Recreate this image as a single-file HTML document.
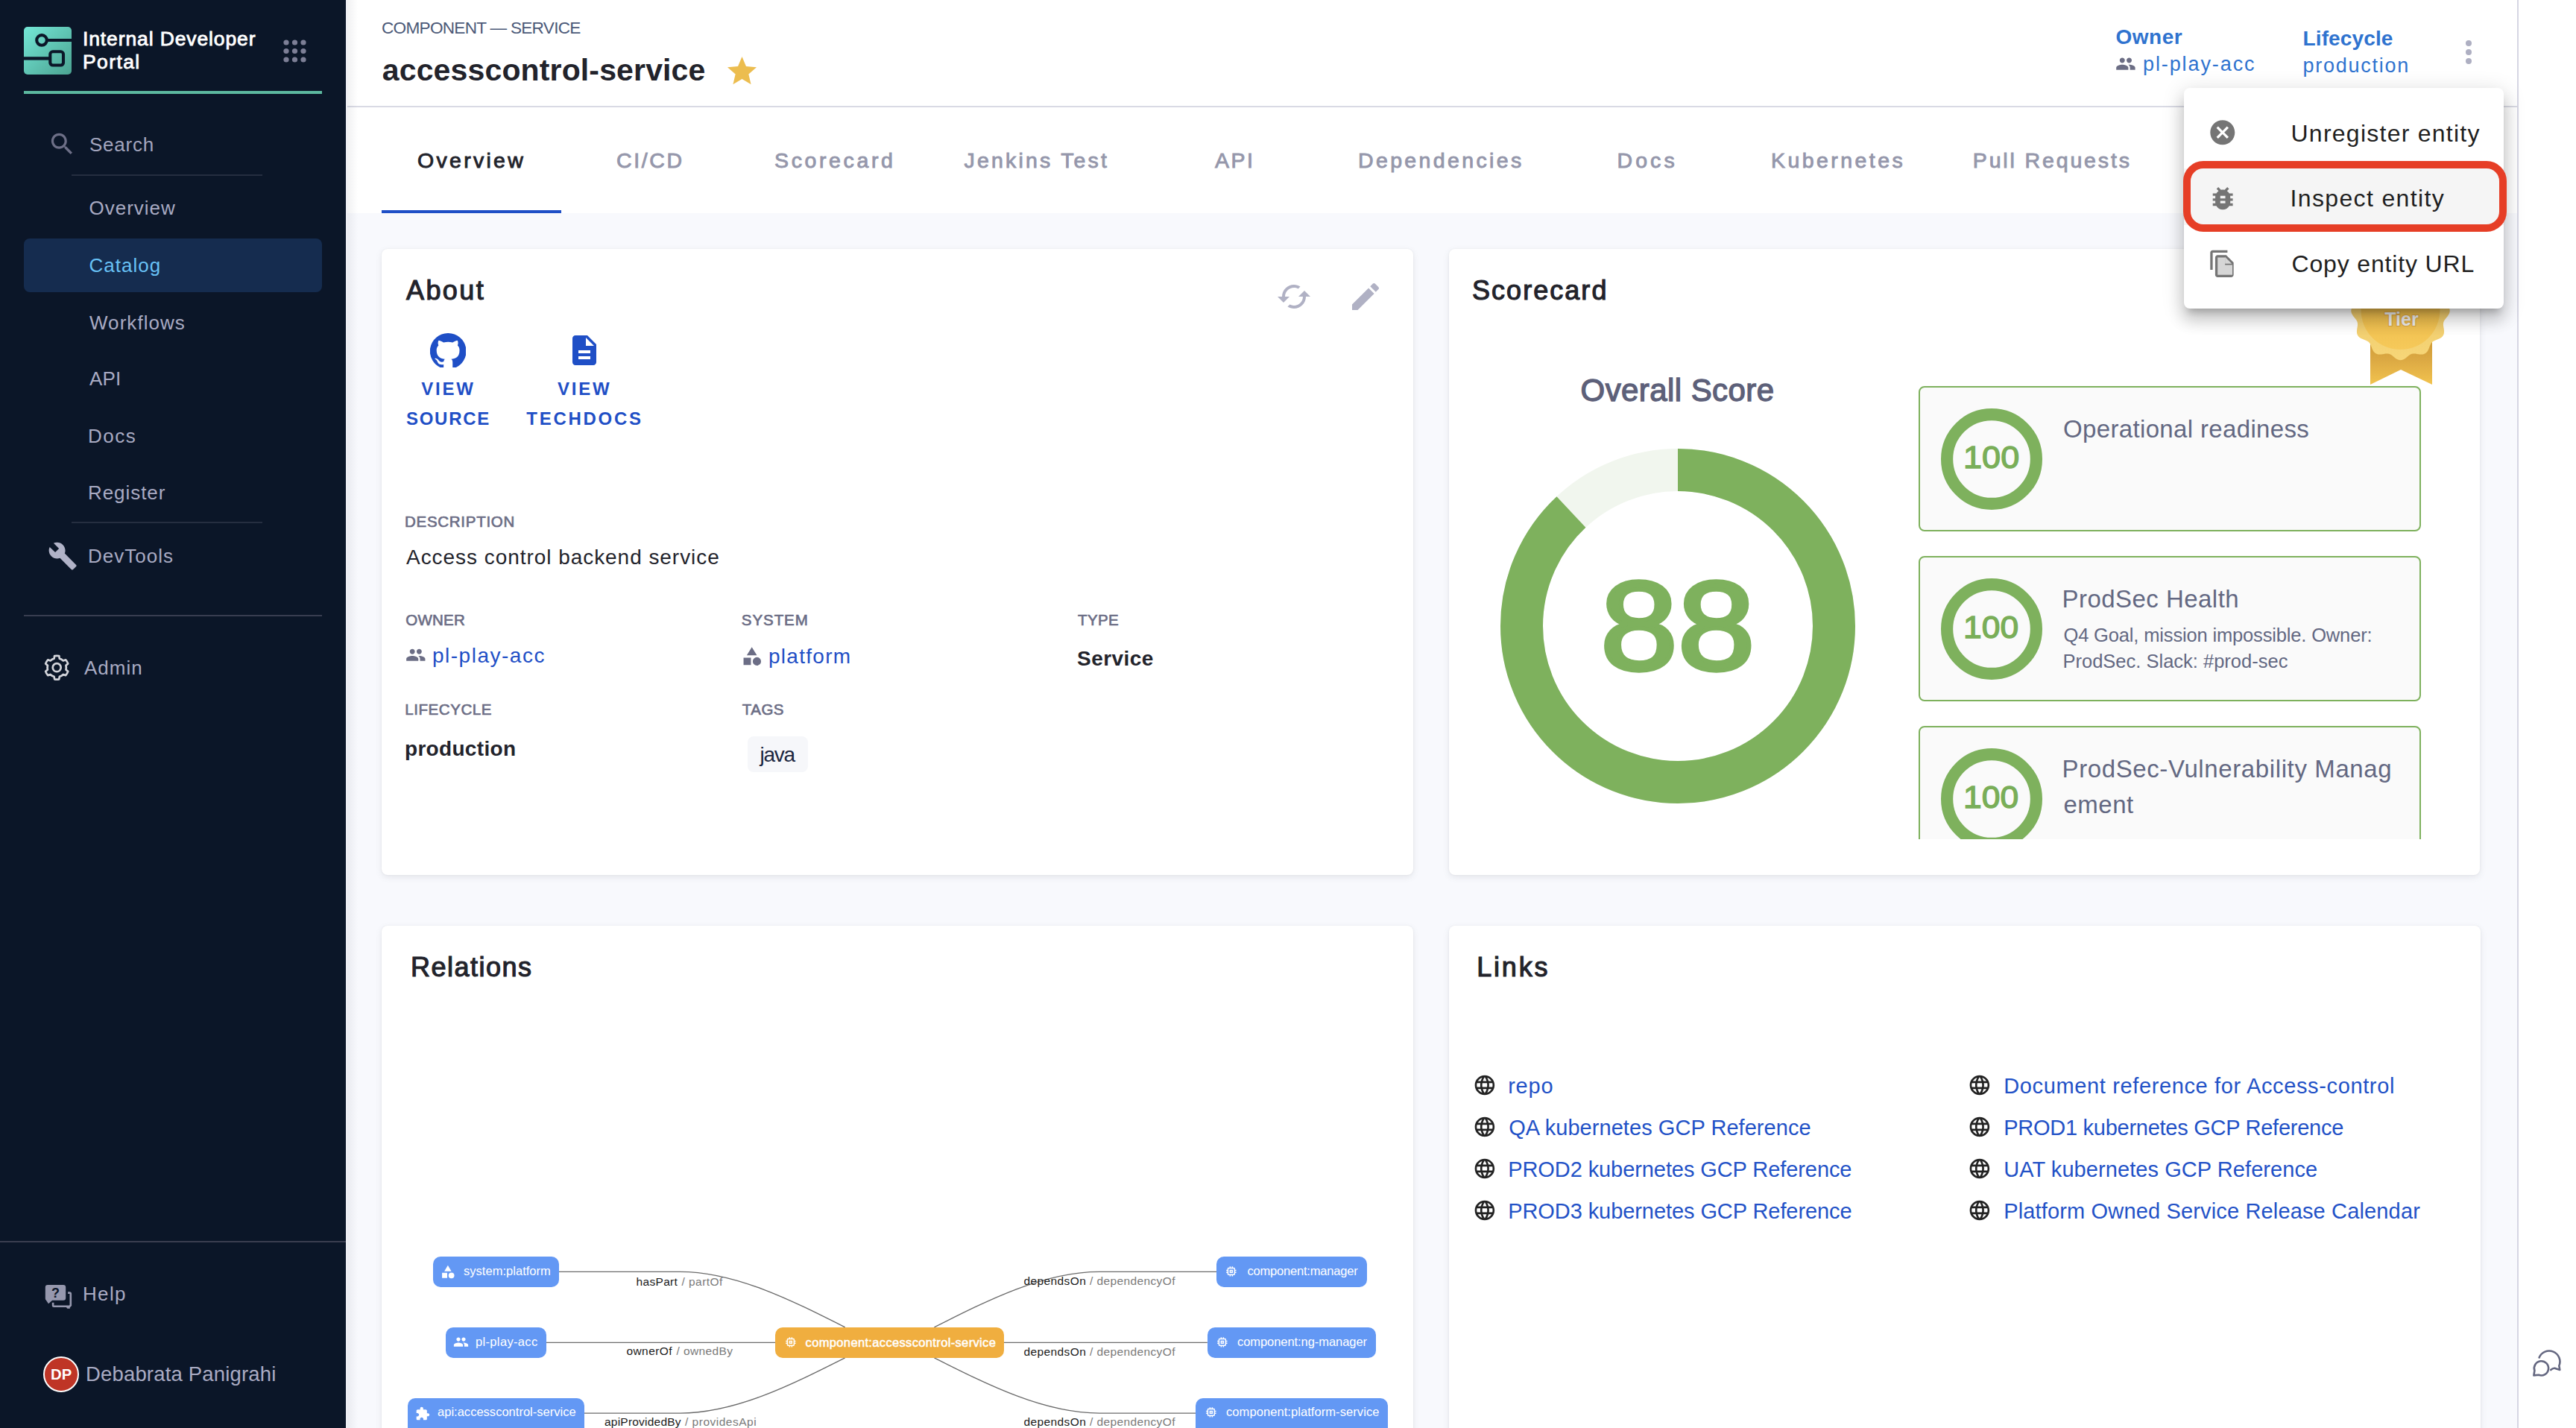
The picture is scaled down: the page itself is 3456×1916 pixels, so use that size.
<!DOCTYPE html>
<html><head><meta charset="utf-8"><title>accesscontrol-service | Internal Developer Portal</title>
<style>
html,body{margin:0;padding:0;}
body{width:3456px;height:1916px;position:relative;overflow:hidden;background:#f8f9fd;font-family:"Liberation Sans",sans-serif;}
.t{position:absolute;line-height:1;white-space:nowrap;}

.card{position:absolute;background:#fff;border-radius:8px;box-shadow:0 1px 3px rgba(30,35,60,0.08),0 0 1px rgba(30,35,60,0.10);}
.z{z-index:20;}

</style></head><body>
<div style="position:absolute;left:0px;top:0px;width:464px;height:1916px;background:#0b1628;"></div>
<div style="position:absolute;left:464px;top:0px;width:2913px;height:143px;background:#fff;"></div>
<div style="position:absolute;left:464px;top:142px;width:2913px;height:2px;background:#d9dae4;"></div>
<div style="position:absolute;left:464px;top:144px;width:2913px;height:142px;background:#ffffff;"></div>
<div style="position:absolute;left:3377px;top:0px;width:79px;height:1916px;background:#fff;"></div>
<div style="position:absolute;left:3377px;top:0px;width:1.5px;height:1916px;background:#d6d6e4;"></div>
<div style="position:absolute;left:464px;top:0px;width:16px;height:1916px;background:linear-gradient(90deg,rgba(20,25,50,0.07),rgba(20,25,50,0));"></div>
<div style="position:absolute;left:464px;top:0px;width:2px;height:1916px;background:#eeeff4;"></div>
<svg style="position:absolute;left:32px;top:36px" width="64" height="64" viewBox="0 0 64 64">
<defs><linearGradient id="lg" x1="0" y1="0" x2="1" y2="1"><stop offset="0" stop-color="#74e6d6"/><stop offset="1" stop-color="#4ba391"/></linearGradient></defs>
<rect x="0" y="0" width="64" height="64" rx="5" fill="url(#lg)"/>
<circle cx="24" cy="17.9" r="6.8" fill="none" stroke="#0b1628" stroke-width="4.1"/>
<rect x="30" y="16" width="34" height="4" fill="#0b1628"/>
<rect x="35.3" y="33.3" width="17.7" height="18.2" rx="3.5" fill="none" stroke="#0b1628" stroke-width="4.1"/>
<rect x="0" y="40.2" width="35.3" height="4.4" fill="#0b1628"/>
</svg>
<svg style="position:absolute;left:380px;top:53px" width="32" height="32" viewBox="0 0 32 32"><circle cx="4.0" cy="4.0" r="3.6" fill="#7d7f96"/><circle cx="4.0" cy="15.5" r="3.6" fill="#7d7f96"/><circle cx="4.0" cy="27.0" r="3.6" fill="#7d7f96"/><circle cx="15.5" cy="4.0" r="3.6" fill="#7d7f96"/><circle cx="15.5" cy="15.5" r="3.6" fill="#7d7f96"/><circle cx="15.5" cy="27.0" r="3.6" fill="#7d7f96"/><circle cx="27.0" cy="4.0" r="3.6" fill="#7d7f96"/><circle cx="27.0" cy="15.5" r="3.6" fill="#7d7f96"/><circle cx="27.0" cy="27.0" r="3.6" fill="#7d7f96"/></svg>
<div style="position:absolute;left:32px;top:122px;width:400px;height:4px;background:#5cb89f;"></div>
<svg style="position:absolute;left:64.2px;top:174.2px" width="38.7" height="38.7" viewBox="0 0 24 24"><path fill="#6d6f87" d="M15.5 14h-.79l-.28-.27C15.41 12.59 16 11.11 16 9.5 16 5.91 13.09 3 9.5 3S3 5.91 3 9.5 5.91 16 9.5 16c1.61 0 3.09-.59 4.23-1.57l.27.28v.79l5 4.99L20.49 19l-4.99-5zm-6 0C7.01 14 5 11.99 5 9.5S7.01 5 9.5 5 14 7.01 14 9.5 11.99 14 9.5 14z"/></svg>
<div style="position:absolute;left:96px;top:234px;width:256px;height:2px;background:#252e40;"></div>
<div style="position:absolute;left:32px;top:320px;width:400px;height:71.5px;background:#152c4f;border-radius:8px;"></div>
<div style="position:absolute;left:96px;top:700px;width:256px;height:2px;background:#252e40;"></div>
<svg style="position:absolute;left:63.85px;top:725.85px" width="40.3" height="40.3" viewBox="0 0 24 24"><path fill="#b1b3c8" d="M22.7 19l-9.1-9.1c.9-2.3.4-5-1.5-6.9-2-2-5-2.4-7.4-1.3L9 6 6 9 1.6 4.7C.4 7.1.9 10.1 2.9 12.1c1.9 1.9 4.6 2.4 6.9 1.5l9.1 9.1c.4.4 1 .4 1.4 0l2.3-2.3c.5-.4.5-1.1.1-1.4z"/></svg>
<div style="position:absolute;left:32px;top:825px;width:400px;height:2px;background:#383d50;"></div>
<svg style="position:absolute;left:50px;top:870px" width="55" height="55" viewBox="50 870 55 55"><path fill="none" stroke="#d3d4da" stroke-width="2.7" stroke-linejoin="round" d="M72.52,883.65 L73.17,880.09 A15.9,15.9 0 0 1 79.23,880.09 L79.88,883.65 A12.6,12.6 0 0 1 84.79,886.48 L88.20,885.27 A15.9,15.9 0 0 1 91.23,890.52 L88.48,892.87 A12.6,12.6 0 0 1 88.48,898.53 L91.23,900.88 A15.9,15.9 0 0 1 88.20,906.13 L84.79,904.92 A12.6,12.6 0 0 1 79.88,907.75 L79.23,911.31 A15.9,15.9 0 0 1 73.17,911.31 L72.52,907.75 A12.6,12.6 0 0 1 67.61,904.92 L64.20,906.13 A15.9,15.9 0 0 1 61.17,900.88 L63.92,898.53 A12.6,12.6 0 0 1 63.92,892.87 L61.17,890.52 A15.9,15.9 0 0 1 64.20,885.27 L67.61,886.48 A12.6,12.6 0 0 1 72.52,883.65 Z"/><circle cx="76.2" cy="895.7" r="5.5" fill="none" stroke="#d3d4da" stroke-width="2.7"/></svg>
<div style="position:absolute;left:0px;top:1665px;width:464px;height:2px;background:#3a3e50;"></div>
<svg style="position:absolute;left:50px;top:1715px" width="60" height="50" viewBox="50 1715 60 50">
<path fill="#9698ae" d="M64 1724.1h21a3.2 3.2 0 0 1 3.2 3.2v14.3a3.2 3.2 0 0 1-3.2 3.2H70.1l-5.1 4.4-3.2-4.6a3.2 3.2 0 0 1-1-2.6v-14.7a3.2 3.2 0 0 1 3.2-3.2z"/>
<path fill="none" stroke="#9698ae" stroke-width="2.6" d="M91.1 1734.6h2.3a1.4 1.4 0 0 1 1.4 1.4v15.5l-1.2 1.2h-21.3a1.2 1.2 0 0 1-1.2-1.2v-3.8"/>
<path fill="#9698ae" d="M88.2 1753.2l2.2 2.6h3.4v-3z"/>
<text x="74.6" y="1741" font-family="Liberation Sans" font-weight="700" font-size="18" fill="#0b1628" text-anchor="middle">?</text>
</svg>
<div style="position:absolute;left:58px;top:1820px;width:44px;height:44px;border-radius:50%;background:#bf3526;border:2px solid #fff;"></div>
<svg style="position:absolute;left:975.5px;top:75.8px" width="39" height="37.2" viewBox="2 3 20 19" preserveAspectRatio="none"><path fill="#ecbd4f" d="M12 18.27L18.18 22l-1.64-7.03L22 10.24l-7.19-.61L12 3 9.19 9.63 2 10.24l5.46 4.73L5.82 22z"/></svg>
<svg style="position:absolute;left:2837.9px;top:74.4px" width="27.8" height="23.1" viewBox="0 0 24 20"><path fill="#6b6d84" d="M16 9c1.66 0 2.99-1.34 2.99-3S17.66 3 16 3c-1.66 0-3 1.34-3 3s1.34 3 3 3zm-8 0c1.66 0 2.99-1.34 2.99-3S9.66 3 8 3C6.34 3 5 4.34 5 6s1.34 3 3 3zm0 2c-2.33 0-7 1.17-7 3.5V17h14v-2.5c0-2.33-4.67-3.5-7-3.5zm8 0c-.29 0-.62.02-.97.05 1.16.84 1.97 1.97 1.97 3.45V17h6v-2.5c0-2.33-4.67-3.5-7-3.5z"/></svg>
<div style="position:absolute;left:3307.9px;top:53.85px;width:8.299999999999727px;height:8.299999999999997px;background:#aeafc2;border-radius:50%;"></div>
<div style="position:absolute;left:3307.9px;top:65.85px;width:8.299999999999727px;height:8.300000000000011px;background:#aeafc2;border-radius:50%;"></div>
<div style="position:absolute;left:3307.9px;top:77.85px;width:8.299999999999727px;height:8.300000000000011px;background:#aeafc2;border-radius:50%;"></div>
<div style="position:absolute;left:512px;top:282px;width:241px;height:4px;background:#1f4fc6;"></div>
<div style="position:absolute;left:512px;top:334px;width:1384px;height:840px;background:#fff;border-radius:8px;box-shadow:0 3px 8px rgba(96,97,112,0.13),0 0 2px rgba(96,97,112,0.10);"></div>
<div style="position:absolute;left:1944px;top:334px;width:1383px;height:840px;background:#fff;border-radius:8px;box-shadow:0 3px 8px rgba(96,97,112,0.13),0 0 2px rgba(96,97,112,0.10);"></div>
<div style="position:absolute;left:512px;top:1242px;width:1384px;height:758px;background:#fff;border-radius:8px;box-shadow:0 3px 8px rgba(96,97,112,0.13),0 0 2px rgba(96,97,112,0.10);"></div>
<div style="position:absolute;left:1944px;top:1242px;width:1384px;height:758px;background:#fff;border-radius:8px;box-shadow:0 3px 8px rgba(96,97,112,0.13),0 0 2px rgba(96,97,112,0.10);"></div>
<svg style="position:absolute;left:1712px;top:374px" width="48" height="48" viewBox="0 0 24 24"><path fill="#b0b1c4" d="M19 8l-4 4h3c0 3.31-2.69 6-6 6-1.01 0-1.97-.25-2.8-.7l-1.46 1.46C8.97 19.54 10.43 20 12 20c4.42 0 8-3.58 8-8h3l-4-4zM6 12c0-3.31 2.69-6 6-6 1.01 0 1.97.25 2.8.7l1.46-1.46C15.03 4.46 13.57 4 12 4c-4.42 0-8 3.58-8 8H1l4 4 4-4H6z"/></svg>
<svg style="position:absolute;left:1808px;top:374px" width="48" height="48" viewBox="0 0 24 24"><path fill="#b0b1c4" d="M3 17.25V21h3.75L17.81 9.94l-3.75-3.75L3 17.25zM20.71 7.04c.39-.39.39-1.02 0-1.41l-2.34-2.34c-.39-.39-1.02-.39-1.41 0l-1.83 1.83 3.75 3.75 1.83-1.83z"/></svg>
<svg style="position:absolute;left:576.6px;top:446.6px" width="48.4" height="46.4" viewBox="1 1.27 22 21.1"><path fill="#1f4fc6" d="M12 1.27a11 11 0 00-3.48 21.46c.55.09.73-.28.73-.55v-1.84c-3.03.64-3.67-1.46-3.67-1.46-.55-1.29-1.28-1.65-1.28-1.65-.92-.65.1-.65.1-.65 1.1 0 1.73 1.1 1.73 1.1.92 1.65 2.57 1.2 3.21.92a2 2 0 01.64-1.47c-2.47-.27-5.04-1.19-5.04-5.5 0-1.1.46-2.1 1.2-2.84a3.76 3.76 0 010-2.93s.91-.28 3.11 1.1c1.8-.49 3.7-.49 5.5 0 2.1-1.38 3.02-1.1 3.02-1.1a3.76 3.76 0 010 2.93c.83.74 1.2 1.74 1.2 2.94 0 4.2-2.57 5.13-5.04 5.4.45.37.82.92.82 2.02v3.03c0 .27.1.64.73.55A11 11 0 0012 1.27"/></svg>
<svg style="position:absolute;left:759.7px;top:445.8px" width="48" height="48" viewBox="0 0 24 24"><path fill="#1f4fc6" d="M14 2H6c-1.1 0-1.99.9-1.99 2L4 20c0 1.1.89 2 1.99 2H18c1.1 0 2-.9 2-2V8l-6-6zm2 16H8v-2h8v2zm0-4H8v-2h8v2zm-3-5V3.5L18.5 9H13z"/></svg>
<svg style="position:absolute;left:543.6px;top:865.3px" width="27.6" height="27.6" viewBox="0 0 24 24"><path fill="#6b6d85" d="M16 11c1.66 0 2.99-1.34 2.99-3S17.66 5 16 5c-1.66 0-3 1.34-3 3s1.34 3 3 3zm-8 0c1.66 0 2.99-1.34 2.99-3S9.66 5 8 5C6.34 5 5 6.34 5 8s1.34 3 3 3zm0 2c-2.33 0-7 1.17-7 3.5V19h14v-2.5c0-2.33-4.67-3.5-7-3.5zm8 0c-.29 0-.62.02-.97.05 1.16.84 1.97 1.97 1.97 3.45V19h6v-2.5c0-2.33-4.67-3.5-7-3.5z"/></svg>
<svg style="position:absolute;left:996.2px;top:866.7px" width="26.6" height="26.6" viewBox="2 1 21 21.5"><path fill="#6b6d85" d="M12 2l-5.5 9h11z M17.5 17.5m-4.5 0a4.5 4.5 0 1 0 9 0a4.5 4.5 0 1 0 -9 0 M3 13.5h8v8H3z"/></svg>
<div style="position:absolute;left:1003px;top:987.7px;width:81px;height:48.09999999999991px;background:#f6f7fa;border-radius:8px;"></div>
<svg style="position:absolute;left:2010.75px;top:599.80px" width="480" height="480" viewBox="-240 -240 480 480">
<circle r="209.5" fill="none" stroke="#f1f6ee" stroke-width="57"/>
<circle r="209.5" fill="none" stroke="#7eb15d" stroke-width="57" stroke-dasharray="1158.37 1316.3273218541233" transform="rotate(-90)"/>
</svg>
<div style="position:absolute;left:2574px;top:518.2px;width:674px;height:195.0999999999999px;border:2px solid #7eb15d;border-radius:8px;background:#fafafa;box-sizing:border-box;"></div>
<svg style="position:absolute;left:2604px;top:547.8px" width="136" height="136" viewBox="-68 -68 136 136"><circle r="59.9" fill="none" stroke="#7eb15d" stroke-width="16.2"/></svg>
<div style="position:absolute;left:2574px;top:746.2px;width:674px;height:195.0999999999999px;border:2px solid #7eb15d;border-radius:8px;background:#fafafa;box-sizing:border-box;"></div>
<svg style="position:absolute;left:2604px;top:775.8px" width="136" height="136" viewBox="-68 -68 136 136"><circle r="59.9" fill="none" stroke="#7eb15d" stroke-width="16.2"/></svg>
<div style="position:absolute;left:2574px;top:974.2px;width:674px;height:151.5px;overflow:hidden;"><div style="position:absolute;left:0;top:0;width:670px;height:191px;border:2px solid #7eb15d;border-radius:8px;background:#fafafa;"></div><svg style="position:absolute;left:30px;top:29.6px" width="136" height="136" viewBox="-68 -68 136 136"><circle r="59.9" fill="none" stroke="#7eb15d" stroke-width="16.2"/></svg></div>
<svg style="position:absolute;left:3140px;top:330px" width="170" height="200" viewBox="3140 330 170 200">
<defs>
<linearGradient id="rib" x1="0" y1="0" x2="0" y2="1"><stop offset="0" stop-color="#c9922e"/><stop offset="0.55" stop-color="#dba843"/><stop offset="1" stop-color="#f2c34f"/></linearGradient>
<linearGradient id="med" x1="0" y1="0" x2="0" y2="1"><stop offset="0" stop-color="#d3a94c"/><stop offset="0.5" stop-color="#efcb6c"/><stop offset="1" stop-color="#f7d678"/></linearGradient>
<linearGradient id="med2" x1="0" y1="0" x2="0" y2="1"><stop offset="0" stop-color="#c9973a"/><stop offset="0.6" stop-color="#efbf4e"/><stop offset="1" stop-color="#f6c95a"/></linearGradient>
</defs>
<path d="M3180 440 L3263 440 L3263 516 L3221 496 L3180 516 Z" fill="url(#rib)"/>
<path d="M3220.50,350.80 L3222.23,350.98 L3223.93,351.50 L3225.59,352.32 L3227.19,353.36 L3228.72,354.54 L3230.20,355.75 L3231.64,356.90 L3233.06,357.91 L3234.50,358.70 L3235.98,359.24 L3237.53,359.51 L3239.17,359.55 L3240.90,359.39 L3242.72,359.11 L3244.61,358.80 L3246.53,358.54 L3248.43,358.44 L3250.28,358.56 L3252.01,358.96 L3253.60,359.67 L3255.01,360.69 L3256.22,361.99 L3257.25,363.53 L3258.11,365.23 L3258.85,367.02 L3259.52,368.81 L3260.19,370.52 L3260.92,372.11 L3261.77,373.51 L3262.78,374.72 L3263.99,375.73 L3265.39,376.58 L3266.98,377.31 L3268.69,377.98 L3270.48,378.65 L3272.27,379.39 L3273.97,380.25 L3275.51,381.28 L3276.81,382.49 L3277.83,383.90 L3278.54,385.49 L3278.94,387.22 L3279.06,389.07 L3278.96,390.97 L3278.70,392.89 L3278.39,394.78 L3278.11,396.60 L3277.95,398.33 L3277.99,399.97 L3278.26,401.52 L3278.80,403.00 L3279.59,404.44 L3280.60,405.86 L3281.75,407.30 L3282.96,408.78 L3284.14,410.31 L3285.18,411.91 L3286.00,413.57 L3286.52,415.27 L3286.70,417.00 L3286.52,418.73 L3286.00,420.43 L3285.18,422.09 L3284.14,423.69 L3282.96,425.22 L3281.75,426.70 L3280.60,428.14 L3279.59,429.56 L3278.80,431.00 L3278.26,432.48 L3277.99,434.03 L3277.95,435.67 L3278.11,437.40 L3278.39,439.22 L3278.70,441.11 L3278.96,443.03 L3279.06,444.93 L3278.94,446.78 L3278.54,448.51 L3277.83,450.10 L3276.81,451.51 L3275.51,452.72 L3273.97,453.75 L3272.27,454.61 L3270.48,455.35 L3268.69,456.02 L3266.98,456.69 L3265.39,457.42 L3263.99,458.27 L3262.78,459.28 L3261.77,460.49 L3260.92,461.89 L3260.19,463.48 L3259.52,465.19 L3258.85,466.98 L3258.11,468.77 L3257.25,470.47 L3256.22,472.01 L3255.01,473.31 L3253.60,474.33 L3252.01,475.04 L3250.28,475.44 L3248.43,475.56 L3246.53,475.46 L3244.61,475.20 L3242.72,474.89 L3240.90,474.61 L3239.17,474.45 L3237.53,474.49 L3235.98,474.76 L3234.50,475.30 L3233.06,476.09 L3231.64,477.10 L3230.20,478.25 L3228.72,479.46 L3227.19,480.64 L3225.59,481.68 L3223.93,482.50 L3222.23,483.02 L3220.50,483.20 L3218.77,483.02 L3217.07,482.50 L3215.41,481.68 L3213.81,480.64 L3212.28,479.46 L3210.80,478.25 L3209.36,477.10 L3207.94,476.09 L3206.50,475.30 L3205.02,474.76 L3203.47,474.49 L3201.83,474.45 L3200.10,474.61 L3198.28,474.89 L3196.39,475.20 L3194.47,475.46 L3192.57,475.56 L3190.72,475.44 L3188.99,475.04 L3187.40,474.33 L3185.99,473.31 L3184.78,472.01 L3183.75,470.47 L3182.89,468.77 L3182.15,466.98 L3181.48,465.19 L3180.81,463.48 L3180.08,461.89 L3179.23,460.49 L3178.22,459.28 L3177.01,458.27 L3175.61,457.42 L3174.02,456.69 L3172.31,456.02 L3170.52,455.35 L3168.73,454.61 L3167.03,453.75 L3165.49,452.72 L3164.19,451.51 L3163.17,450.10 L3162.46,448.51 L3162.06,446.78 L3161.94,444.93 L3162.04,443.03 L3162.30,441.11 L3162.61,439.22 L3162.89,437.40 L3163.05,435.67 L3163.01,434.03 L3162.74,432.48 L3162.20,431.00 L3161.41,429.56 L3160.40,428.14 L3159.25,426.70 L3158.04,425.22 L3156.86,423.69 L3155.82,422.09 L3155.00,420.43 L3154.48,418.73 L3154.30,417.00 L3154.48,415.27 L3155.00,413.57 L3155.82,411.91 L3156.86,410.31 L3158.04,408.78 L3159.25,407.30 L3160.40,405.86 L3161.41,404.44 L3162.20,403.00 L3162.74,401.52 L3163.01,399.97 L3163.05,398.33 L3162.89,396.60 L3162.61,394.78 L3162.30,392.89 L3162.04,390.97 L3161.94,389.07 L3162.06,387.22 L3162.46,385.49 L3163.17,383.90 L3164.19,382.49 L3165.49,381.28 L3167.03,380.25 L3168.73,379.39 L3170.52,378.65 L3172.31,377.98 L3174.02,377.31 L3175.61,376.58 L3177.01,375.73 L3178.22,374.72 L3179.23,373.51 L3180.08,372.11 L3180.81,370.52 L3181.48,368.81 L3182.15,367.02 L3182.89,365.23 L3183.75,363.53 L3184.78,361.99 L3185.99,360.69 L3187.40,359.67 L3188.99,358.96 L3190.72,358.56 L3192.57,358.44 L3194.47,358.54 L3196.39,358.80 L3198.28,359.11 L3200.10,359.39 L3201.83,359.55 L3203.47,359.51 L3205.02,359.24 L3206.50,358.70 L3207.94,357.91 L3209.36,356.90 L3210.80,355.75 L3212.28,354.54 L3213.81,353.36 L3215.41,352.32 L3217.07,351.50 L3218.77,350.98 L3220.50,350.80Z" fill="url(#med)"/>
<circle cx="3220.5" cy="416" r="53" fill="url(#med2)"/>
<text x="3222" y="436.5" font-family="Liberation Sans" font-weight="700" font-size="25" fill="#eeeeee" stroke="#dba640" stroke-width="2.2" paint-order="stroke" text-anchor="middle">Tier</text>
</svg>
<div style="position:absolute;left:2930px;top:118px;width:429px;height:296px;background:#fff;border-radius:8px;z-index:20;box-shadow:0 10px 10px -6px rgba(0,0,0,0.2),0 16px 20px 2px rgba(0,0,0,0.14),0 6px 28px 4px rgba(0,0,0,0.12);"></div>
<div style="position:absolute;left:2930px;top:226px;width:429px;height:76px;background:#f5f5f5;z-index:21;"></div>
<div style="position:absolute;left:2929px;top:216.2px;width:434px;height:95.19999999999999px;border:10px solid #e63e26;border-radius:27px;box-sizing:border-box;z-index:22;"></div>
<svg style="position:absolute;left:2962.2px;top:158.1px;z-index:23" width="39.6" height="39.6" viewBox="0 0 24 24"><path fill="#757575" d="M12 2C6.47 2 2 6.47 2 12s4.47 10 10 10 10-4.47 10-10S17.53 2 12 2zm5 13.59L15.59 17 12 13.41 8.41 17 7 15.59 10.59 12 7 8.41 8.41 7 12 10.59 15.59 7 17 8.41 13.41 12 17 15.59z"/></svg>
<svg style="position:absolute;left:2961.9px;top:246.2px;z-index:23" width="40.3" height="40.3" viewBox="0 0 24 24"><path fill="#757575" d="M20 8h-2.81c-.45-.78-1.07-1.45-1.82-1.96L17 4.41 15.59 3l-2.17 2.17C12.96 5.06 12.49 5 12 5c-.49 0-.96.06-1.41.17L8.41 3 7 4.41l1.62 1.63C7.88 6.55 7.26 7.22 6.81 8H4v2h2.09c-.05.33-.09.66-.09 1v1H4v2h2v1c0 .34.04.67.09 1H4v2h2.81c1.04 1.79 2.97 3 5.19 3s4.15-1.21 5.19-3H20v-2h-2.09c.05-.33.09-.66.09-1v-1h2v-2h-2v-1c0-.34-.04-.67-.09-1H20V8zm-6 8h-4v-2h4v2zm0-4h-4v-2h4v2z"/></svg>
<svg style="position:absolute;left:2961.5px;top:334px;z-index:23" width="39.6" height="39.6" viewBox="0 0 24 24">
<path fill="#d6d6d6" d="M15 6H8v16h12V11z"/>
<path fill="#757575" d="M16 1H4c-1.1 0-2 .9-2 2v14h2V3h12V1zm-1 4l6 6v10c0 1.1-.9 2-2 2H7.99C6.89 23 6 22.1 6 21l.01-14c0-1.1.89-2 1.99-2h7zm-1 7h5.5L14 6.5V12z" fill-rule="evenodd"/>
<path fill="#d6d6d6" d="M8 7h6v6h6v8H8z"/>
</svg>
<svg style="position:absolute;left:0;top:0" width="3456" height="1916" viewBox="0 0 3456 1916"><path d="M749.70,1706.30 C803.80,1706.30 857.90,1706.30 912.00,1706.30 C985.90,1706.30 1059.80,1743.55 1133.70,1780.80" fill="none" stroke="#6b6b6b" stroke-width="1.3"/><path d="M732.8,1801.4 L1040.3,1801.4" fill="none" stroke="#6b6b6b" stroke-width="1.3"/><path d="M783.70,1896.10 C826.60,1896.10 869.50,1896.10 912.40,1896.10 C986.17,1896.10 1059.93,1859.00 1133.70,1821.90" fill="none" stroke="#6b6b6b" stroke-width="1.3"/><path d="M1253.40,1780.80 C1327.27,1743.55 1401.13,1706.30 1475.00,1706.30 C1527.37,1706.30 1579.73,1706.30 1632.10,1706.30" fill="none" stroke="#6b6b6b" stroke-width="1.3"/><path d="M1346.8,1801.4 L1619.8,1801.4" fill="none" stroke="#6b6b6b" stroke-width="1.3"/><path d="M1253.40,1821.90 C1327.27,1859.00 1401.13,1896.10 1475.00,1896.10 C1518.07,1896.10 1561.13,1896.10 1604.20,1896.10" fill="none" stroke="#6b6b6b" stroke-width="1.3"/></svg>
<div style="position:absolute;left:580.9px;top:1685.9px;width:168.80000000000007px;height:41.399999999999864px;background:#6398f4;border-radius:10px;"></div>
<div style="position:absolute;left:597.5px;top:1780.6px;width:135.29999999999995px;height:41.200000000000045px;background:#6398f4;border-radius:10px;"></div>
<div style="position:absolute;left:546.5px;top:1875.7px;width:237.20000000000005px;height:54.299999999999955px;background:#6398f4;border-radius:10px;"></div>
<div style="position:absolute;left:1040.3px;top:1780.8px;width:306.5px;height:41.100000000000136px;background:#f0ae3f;border-radius:10px;"></div>
<div style="position:absolute;left:1632.1px;top:1686.1px;width:201.70000000000005px;height:41.0px;background:#6398f4;border-radius:10px;"></div>
<div style="position:absolute;left:1619.8px;top:1781px;width:226.29999999999995px;height:40.799999999999955px;background:#6398f4;border-radius:10px;"></div>
<div style="position:absolute;left:1604.2px;top:1875.9px;width:257.39999999999986px;height:54.09999999999991px;background:#6398f4;border-radius:10px;"></div>
<svg style="position:absolute;left:592.4px;top:1697.2px" width="18.6" height="18.6" viewBox="2 1 21 21.5"><path fill="#fff" d="M12 2l-5.5 9h11z M17.5 17.5m-4.5 0a4.5 4.5 0 1 0 9 0a4.5 4.5 0 1 0 -9 0 M3 13.5h8v8H3z"/></svg>
<svg style="position:absolute;left:607.6px;top:1790px" width="21" height="21" viewBox="0 0 24 24"><path fill="#fff" d="M16 11c1.66 0 2.99-1.34 2.99-3S17.66 5 16 5c-1.66 0-3 1.34-3 3s1.34 3 3 3zm-8 0c1.66 0 2.99-1.34 2.99-3S9.66 5 8 5C6.34 5 5 6.34 5 8s1.34 3 3 3zm0 2c-2.33 0-7 1.17-7 3.5V19h14v-2.5c0-2.33-4.67-3.5-7-3.5zm8 0c-.29 0-.62.02-.97.05 1.16.84 1.97 1.97 1.97 3.45V19h6v-2.5c0-2.33-4.67-3.5-7-3.5z"/></svg>
<svg style="position:absolute;left:557px;top:1887px" width="20" height="20" viewBox="0 0 24 24"><path fill="#fff" d="M20.5 11H19V7c0-1.1-.9-2-2-2h-4V3.5C13 2.12 11.88 1 10.5 1S8 2.12 8 3.5V5H4c-1.1 0-1.99.9-1.99 2v3.8H3.5c1.49 0 2.7 1.21 2.7 2.7s-1.21 2.7-2.7 2.7H2V20c0 1.1.9 2 2 2h3.8v-1.5c0-1.49 1.21-2.7 2.7-2.7 1.49 0 2.7 1.21 2.7 2.7V22H17c1.1 0 2-.9 2-2v-4h1.5c1.38 0 2.5-1.12 2.5-2.5S21.88 11 20.5 11z"/></svg>
<svg style="position:absolute;left:1051.9px;top:1792.2px" width="17.75" height="17.75" viewBox="0 0 24 24"><path fill="#fff" d="M15 9H9v6h6V9zm-2 4h-2v-2h2v2zm8-2V9h-2V7c0-1.1-.9-2-2-2h-2V3h-2v2h-2V3H9v2H7c-1.1 0-2 .9-2 2v2H3v2h2v2H3v2h2v2c0 1.1.9 2 2 2h2v2h2v-2h2v2h2v-2h2c1.1 0 2-.9 2-2v-2h2v-2h-2v-2h2zm-4 6H7V7h10v10z"/></svg>
<svg style="position:absolute;left:1643.0px;top:1696.9px" width="17.75" height="17.75" viewBox="0 0 24 24"><path fill="#fff" d="M15 9H9v6h6V9zm-2 4h-2v-2h2v2zm8-2V9h-2V7c0-1.1-.9-2-2-2h-2V3h-2v2h-2V3H9v2H7c-1.1 0-2 .9-2 2v2H3v2h2v2H3v2h2v2c0 1.1.9 2 2 2h2v2h2v-2h2v2h2v-2h2c1.1 0 2-.9 2-2v-2h2v-2h-2v-2h2zm-4 6H7V7h10v10z"/></svg>
<svg style="position:absolute;left:1630.9px;top:1792.0px" width="17.75" height="17.75" viewBox="0 0 24 24"><path fill="#fff" d="M15 9H9v6h6V9zm-2 4h-2v-2h2v2zm8-2V9h-2V7c0-1.1-.9-2-2-2h-2V3h-2v2h-2V3H9v2H7c-1.1 0-2 .9-2 2v2H3v2h2v2H3v2h2v2c0 1.1.9 2 2 2h2v2h2v-2h2v2h2v-2h2c1.1 0 2-.9 2-2v-2h2v-2h-2v-2h2zm-4 6H7V7h10v10z"/></svg>
<svg style="position:absolute;left:1615.6px;top:1886.3px" width="17.75" height="17.75" viewBox="0 0 24 24"><path fill="#fff" d="M15 9H9v6h6V9zm-2 4h-2v-2h2v2zm8-2V9h-2V7c0-1.1-.9-2-2-2h-2V3h-2v2h-2V3H9v2H7c-1.1 0-2 .9-2 2v2H3v2h2v2H3v2h2v2c0 1.1.9 2 2 2h2v2h2v-2h2v2h2v-2h2c1.1 0 2-.9 2-2v-2h2v-2h-2v-2h2zm-4 6H7V7h10v10z"/></svg>
<svg style="position:absolute;left:1976.2px;top:1439.8px" width="31.8" height="31.8" viewBox="0 0 24 24"><path fill="#222" d="M11.99 2C6.47 2 2 6.48 2 12s4.47 10 9.99 10C17.52 22 22 17.52 22 12S17.52 2 11.99 2zm6.93 6h-2.95c-.32-1.25-.78-2.45-1.38-3.56 1.84.63 3.37 1.91 4.33 3.56zM12 4.04c.83 1.2 1.48 2.53 1.91 3.96h-3.82c.43-1.43 1.08-2.76 1.91-3.96zM4.26 14C4.1 13.36 4 12.69 4 12s.1-1.36.26-2h3.38c-.08.66-.14 1.32-.14 2 0 .68.06 1.34.14 2H4.26zm.82 2h2.95c.32 1.25.78 2.45 1.38 3.56-1.84-.63-3.37-1.9-4.33-3.56zm2.95-8H5.08c.96-1.66 2.49-2.93 4.33-3.56C8.81 5.55 8.35 6.75 8.03 8zM12 19.96c-.83-1.2-1.48-2.53-1.91-3.96h3.82c-.43 1.43-1.08 2.76-1.91 3.96zM14.34 14H9.66c-.09-.66-.16-1.32-.16-2 0-.68.07-1.35.16-2h4.68c.09.65.16 1.32.16 2 0 .68-.07 1.34-.16 2zm.25 5.56c.6-1.11 1.06-2.31 1.38-3.56h2.95c-.96 1.65-2.49 2.93-4.33 3.56zM16.36 14c.08-.66.14-1.32.14-2 0-.68-.06-1.34-.14-2h3.38c.16.64.26 1.31.26 2s-.1 1.36-.26 2h-3.38z"/></svg>
<svg style="position:absolute;left:1976.2px;top:1495.9px" width="31.8" height="31.8" viewBox="0 0 24 24"><path fill="#222" d="M11.99 2C6.47 2 2 6.48 2 12s4.47 10 9.99 10C17.52 22 22 17.52 22 12S17.52 2 11.99 2zm6.93 6h-2.95c-.32-1.25-.78-2.45-1.38-3.56 1.84.63 3.37 1.91 4.33 3.56zM12 4.04c.83 1.2 1.48 2.53 1.91 3.96h-3.82c.43-1.43 1.08-2.76 1.91-3.96zM4.26 14C4.1 13.36 4 12.69 4 12s.1-1.36.26-2h3.38c-.08.66-.14 1.32-.14 2 0 .68.06 1.34.14 2H4.26zm.82 2h2.95c.32 1.25.78 2.45 1.38 3.56-1.84-.63-3.37-1.9-4.33-3.56zm2.95-8H5.08c.96-1.66 2.49-2.93 4.33-3.56C8.81 5.55 8.35 6.75 8.03 8zM12 19.96c-.83-1.2-1.48-2.53-1.91-3.96h3.82c-.43 1.43-1.08 2.76-1.91 3.96zM14.34 14H9.66c-.09-.66-.16-1.32-.16-2 0-.68.07-1.35.16-2h4.68c.09.65.16 1.32.16 2 0 .68-.07 1.34-.16 2zm.25 5.56c.6-1.11 1.06-2.31 1.38-3.56h2.95c-.96 1.65-2.49 2.93-4.33 3.56zM16.36 14c.08-.66.14-1.32.14-2 0-.68-.06-1.34-.14-2h3.38c.16.64.26 1.31.26 2s-.1 1.36-.26 2h-3.38z"/></svg>
<svg style="position:absolute;left:1976.2px;top:1551.9px" width="31.8" height="31.8" viewBox="0 0 24 24"><path fill="#222" d="M11.99 2C6.47 2 2 6.48 2 12s4.47 10 9.99 10C17.52 22 22 17.52 22 12S17.52 2 11.99 2zm6.93 6h-2.95c-.32-1.25-.78-2.45-1.38-3.56 1.84.63 3.37 1.91 4.33 3.56zM12 4.04c.83 1.2 1.48 2.53 1.91 3.96h-3.82c.43-1.43 1.08-2.76 1.91-3.96zM4.26 14C4.1 13.36 4 12.69 4 12s.1-1.36.26-2h3.38c-.08.66-.14 1.32-.14 2 0 .68.06 1.34.14 2H4.26zm.82 2h2.95c.32 1.25.78 2.45 1.38 3.56-1.84-.63-3.37-1.9-4.33-3.56zm2.95-8H5.08c.96-1.66 2.49-2.93 4.33-3.56C8.81 5.55 8.35 6.75 8.03 8zM12 19.96c-.83-1.2-1.48-2.53-1.91-3.96h3.82c-.43 1.43-1.08 2.76-1.91 3.96zM14.34 14H9.66c-.09-.66-.16-1.32-.16-2 0-.68.07-1.35.16-2h4.68c.09.65.16 1.32.16 2 0 .68-.07 1.34-.16 2zm.25 5.56c.6-1.11 1.06-2.31 1.38-3.56h2.95c-.96 1.65-2.49 2.93-4.33 3.56zM16.36 14c.08-.66.14-1.32.14-2 0-.68-.06-1.34-.14-2h3.38c.16.64.26 1.31.26 2s-.1 1.36-.26 2h-3.38z"/></svg>
<svg style="position:absolute;left:1976.2px;top:1608.1px" width="31.8" height="31.8" viewBox="0 0 24 24"><path fill="#222" d="M11.99 2C6.47 2 2 6.48 2 12s4.47 10 9.99 10C17.52 22 22 17.52 22 12S17.52 2 11.99 2zm6.93 6h-2.95c-.32-1.25-.78-2.45-1.38-3.56 1.84.63 3.37 1.91 4.33 3.56zM12 4.04c.83 1.2 1.48 2.53 1.91 3.96h-3.82c.43-1.43 1.08-2.76 1.91-3.96zM4.26 14C4.1 13.36 4 12.69 4 12s.1-1.36.26-2h3.38c-.08.66-.14 1.32-.14 2 0 .68.06 1.34.14 2H4.26zm.82 2h2.95c.32 1.25.78 2.45 1.38 3.56-1.84-.63-3.37-1.9-4.33-3.56zm2.95-8H5.08c.96-1.66 2.49-2.93 4.33-3.56C8.81 5.55 8.35 6.75 8.03 8zM12 19.96c-.83-1.2-1.48-2.53-1.91-3.96h3.82c-.43 1.43-1.08 2.76-1.91 3.96zM14.34 14H9.66c-.09-.66-.16-1.32-.16-2 0-.68.07-1.35.16-2h4.68c.09.65.16 1.32.16 2 0 .68-.07 1.34-.16 2zm.25 5.56c.6-1.11 1.06-2.31 1.38-3.56h2.95c-.96 1.65-2.49 2.93-4.33 3.56zM16.36 14c.08-.66.14-1.32.14-2 0-.68-.06-1.34-.14-2h3.38c.16.64.26 1.31.26 2s-.1 1.36-.26 2h-3.38z"/></svg>
<svg style="position:absolute;left:2640.0px;top:1439.8px" width="31.8" height="31.8" viewBox="0 0 24 24"><path fill="#222" d="M11.99 2C6.47 2 2 6.48 2 12s4.47 10 9.99 10C17.52 22 22 17.52 22 12S17.52 2 11.99 2zm6.93 6h-2.95c-.32-1.25-.78-2.45-1.38-3.56 1.84.63 3.37 1.91 4.33 3.56zM12 4.04c.83 1.2 1.48 2.53 1.91 3.96h-3.82c.43-1.43 1.08-2.76 1.91-3.96zM4.26 14C4.1 13.36 4 12.69 4 12s.1-1.36.26-2h3.38c-.08.66-.14 1.32-.14 2 0 .68.06 1.34.14 2H4.26zm.82 2h2.95c.32 1.25.78 2.45 1.38 3.56-1.84-.63-3.37-1.9-4.33-3.56zm2.95-8H5.08c.96-1.66 2.49-2.93 4.33-3.56C8.81 5.55 8.35 6.75 8.03 8zM12 19.96c-.83-1.2-1.48-2.53-1.91-3.96h3.82c-.43 1.43-1.08 2.76-1.91 3.96zM14.34 14H9.66c-.09-.66-.16-1.32-.16-2 0-.68.07-1.35.16-2h4.68c.09.65.16 1.32.16 2 0 .68-.07 1.34-.16 2zm.25 5.56c.6-1.11 1.06-2.31 1.38-3.56h2.95c-.96 1.65-2.49 2.93-4.33 3.56zM16.36 14c.08-.66.14-1.32.14-2 0-.68-.06-1.34-.14-2h3.38c.16.64.26 1.31.26 2s-.1 1.36-.26 2h-3.38z"/></svg>
<svg style="position:absolute;left:2640.0px;top:1495.9px" width="31.8" height="31.8" viewBox="0 0 24 24"><path fill="#222" d="M11.99 2C6.47 2 2 6.48 2 12s4.47 10 9.99 10C17.52 22 22 17.52 22 12S17.52 2 11.99 2zm6.93 6h-2.95c-.32-1.25-.78-2.45-1.38-3.56 1.84.63 3.37 1.91 4.33 3.56zM12 4.04c.83 1.2 1.48 2.53 1.91 3.96h-3.82c.43-1.43 1.08-2.76 1.91-3.96zM4.26 14C4.1 13.36 4 12.69 4 12s.1-1.36.26-2h3.38c-.08.66-.14 1.32-.14 2 0 .68.06 1.34.14 2H4.26zm.82 2h2.95c.32 1.25.78 2.45 1.38 3.56-1.84-.63-3.37-1.9-4.33-3.56zm2.95-8H5.08c.96-1.66 2.49-2.93 4.33-3.56C8.81 5.55 8.35 6.75 8.03 8zM12 19.96c-.83-1.2-1.48-2.53-1.91-3.96h3.82c-.43 1.43-1.08 2.76-1.91 3.96zM14.34 14H9.66c-.09-.66-.16-1.32-.16-2 0-.68.07-1.35.16-2h4.68c.09.65.16 1.32.16 2 0 .68-.07 1.34-.16 2zm.25 5.56c.6-1.11 1.06-2.31 1.38-3.56h2.95c-.96 1.65-2.49 2.93-4.33 3.56zM16.36 14c.08-.66.14-1.32.14-2 0-.68-.06-1.34-.14-2h3.38c.16.64.26 1.31.26 2s-.1 1.36-.26 2h-3.38z"/></svg>
<svg style="position:absolute;left:2640.0px;top:1551.9px" width="31.8" height="31.8" viewBox="0 0 24 24"><path fill="#222" d="M11.99 2C6.47 2 2 6.48 2 12s4.47 10 9.99 10C17.52 22 22 17.52 22 12S17.52 2 11.99 2zm6.93 6h-2.95c-.32-1.25-.78-2.45-1.38-3.56 1.84.63 3.37 1.91 4.33 3.56zM12 4.04c.83 1.2 1.48 2.53 1.91 3.96h-3.82c.43-1.43 1.08-2.76 1.91-3.96zM4.26 14C4.1 13.36 4 12.69 4 12s.1-1.36.26-2h3.38c-.08.66-.14 1.32-.14 2 0 .68.06 1.34.14 2H4.26zm.82 2h2.95c.32 1.25.78 2.45 1.38 3.56-1.84-.63-3.37-1.9-4.33-3.56zm2.95-8H5.08c.96-1.66 2.49-2.93 4.33-3.56C8.81 5.55 8.35 6.75 8.03 8zM12 19.96c-.83-1.2-1.48-2.53-1.91-3.96h3.82c-.43 1.43-1.08 2.76-1.91 3.96zM14.34 14H9.66c-.09-.66-.16-1.32-.16-2 0-.68.07-1.35.16-2h4.68c.09.65.16 1.32.16 2 0 .68-.07 1.34-.16 2zm.25 5.56c.6-1.11 1.06-2.31 1.38-3.56h2.95c-.96 1.65-2.49 2.93-4.33 3.56zM16.36 14c.08-.66.14-1.32.14-2 0-.68-.06-1.34-.14-2h3.38c.16.64.26 1.31.26 2s-.1 1.36-.26 2h-3.38z"/></svg>
<svg style="position:absolute;left:2640.0px;top:1608.1px" width="31.8" height="31.8" viewBox="0 0 24 24"><path fill="#222" d="M11.99 2C6.47 2 2 6.48 2 12s4.47 10 9.99 10C17.52 22 22 17.52 22 12S17.52 2 11.99 2zm6.93 6h-2.95c-.32-1.25-.78-2.45-1.38-3.56 1.84.63 3.37 1.91 4.33 3.56zM12 4.04c.83 1.2 1.48 2.53 1.91 3.96h-3.82c.43-1.43 1.08-2.76 1.91-3.96zM4.26 14C4.1 13.36 4 12.69 4 12s.1-1.36.26-2h3.38c-.08.66-.14 1.32-.14 2 0 .68.06 1.34.14 2H4.26zm.82 2h2.95c.32 1.25.78 2.45 1.38 3.56-1.84-.63-3.37-1.9-4.33-3.56zm2.95-8H5.08c.96-1.66 2.49-2.93 4.33-3.56C8.81 5.55 8.35 6.75 8.03 8zM12 19.96c-.83-1.2-1.48-2.53-1.91-3.96h3.82c-.43 1.43-1.08 2.76-1.91 3.96zM14.34 14H9.66c-.09-.66-.16-1.32-.16-2 0-.68.07-1.35.16-2h4.68c.09.65.16 1.32.16 2 0 .68-.07 1.34-.16 2zm.25 5.56c.6-1.11 1.06-2.31 1.38-3.56h2.95c-.96 1.65-2.49 2.93-4.33 3.56zM16.36 14c.08-.66.14-1.32.14-2 0-.68-.06-1.34-.14-2h3.38c.16.64.26 1.31.26 2s-.1 1.36-.26 2h-3.38z"/></svg>
<svg style="position:absolute;left:3380px;top:1790px" width="76" height="76" viewBox="3380 1790 76 76">
<path fill="none" stroke="#646780" stroke-width="2.6" stroke-linejoin="round" stroke-linecap="round" d="M3406.6,1821.5 A14.4,14.4 0 1 1 3433.3,1832.6 L3434.3,1838 L3428,1835.9 Q3425,1835.4 3422.2,1838"/>
<path fill="none" stroke="#646780" stroke-width="2.6" stroke-linejoin="round" d="M3400.4,1839 A9.6,9.6 0 1 1 3406,1844.8 L3399.4,1845.4 Z"/>
</svg>
<div id="sb_t1" class="t" style="left:111.00px;top:38.56px;font-size:26.5px;font-weight:400;-webkit-text-stroke:0.85px #ffffff;color:#ffffff;letter-spacing:0.882px;"><span>Internal Developer</span></div>
<div id="sb_t2" class="t" style="left:111.00px;top:69.96px;font-size:26.5px;font-weight:400;-webkit-text-stroke:0.85px #ffffff;color:#ffffff;letter-spacing:1.400px;"><span>Portal</span></div>
<div id="sb_search" class="t" style="left:120.00px;top:180.99px;font-size:26px;font-weight:400;color:#a3a5bd;letter-spacing:0.760px;"><span>Search</span></div>
<div id="sb_overview" class="t" style="left:119.50px;top:266.39px;font-size:26px;font-weight:400;color:#a9abc3;letter-spacing:1.000px;"><span>Overview</span></div>
<div id="sb_catalog" class="t" style="left:119.50px;top:342.99px;font-size:26px;font-weight:400;color:#68c2f6;letter-spacing:1.033px;"><span>Catalog</span></div>
<div id="sb_workflows" class="t" style="left:120.00px;top:419.59px;font-size:26px;font-weight:400;color:#a9abc3;letter-spacing:1.050px;"><span>Workflows</span></div>
<div id="sb_api" class="t" style="left:120.00px;top:494.99px;font-size:26px;font-weight:400;color:#a9abc3;letter-spacing:0.200px;"><span>API</span></div>
<div id="sb_docs" class="t" style="left:118.00px;top:571.69px;font-size:26px;font-weight:400;color:#a9abc3;letter-spacing:1.467px;"><span>Docs</span></div>
<div id="sb_register" class="t" style="left:118.00px;top:647.99px;font-size:26px;font-weight:400;color:#a9abc3;letter-spacing:0.942px;"><span>Register</span></div>
<div id="sb_devtools" class="t" style="left:118.00px;top:732.99px;font-size:26px;font-weight:400;color:#a9abc3;letter-spacing:1.000px;"><span>DevTools</span></div>
<div id="sb_admin" class="t" style="left:113.00px;top:883.49px;font-size:26px;font-weight:400;color:#a9abc3;letter-spacing:1.000px;"><span>Admin</span></div>
<div id="sb_help" class="t" style="left:111.00px;top:1722.99px;font-size:26px;font-weight:400;color:#a9abc3;letter-spacing:1.334px;"><span>Help</span></div>
<div id="sb_dp" class="t" style="left:68.00px;top:1834.27px;font-size:20px;font-weight:700;color:#ffffff;letter-spacing:0.000px;transform:scaleX(1.0159);transform-origin:0 0;"><span>DP</span></div>
<div id="sb_name" class="t" style="left:115.00px;top:1830.12px;font-size:27.5px;font-weight:400;color:#a9abc3;letter-spacing:0.167px;"><span>Debabrata Panigrahi</span></div>
<div id="h_kind" class="t" style="left:512.00px;top:27.06px;font-size:22.6px;font-weight:400;color:#4b5978;letter-spacing:-0.723px;"><span>COMPONENT — SERVICE</span></div>
<div id="h_title" class="t" style="left:512.80px;top:74.09px;font-size:41px;font-weight:700;color:#22232b;letter-spacing:0.140px;"><span>accesscontrol-service</span></div>
<div id="h_owner_l" class="t" style="left:2838.50px;top:36.29px;font-size:28px;font-weight:700;color:#2f73cf;letter-spacing:0.500px;"><span>Owner</span></div>
<div id="h_owner_v" class="t" style="left:2875.00px;top:72.94px;font-size:27px;font-weight:400;color:#2f73cf;letter-spacing:1.900px;"><span>pl-play-acc</span></div>
<div id="h_life_l" class="t" style="left:3089.50px;top:38.39px;font-size:28px;font-weight:700;color:#2f73cf;letter-spacing:0.127px;"><span>Lifecycle</span></div>
<div id="h_life_v" class="t" style="left:3089.50px;top:75.24px;font-size:27px;font-weight:400;color:#2f73cf;letter-spacing:1.734px;"><span>production</span></div>
<div id="tab0" class="t" style="left:560.00px;top:201.37px;font-size:28.5px;font-weight:400;-webkit-text-stroke:0.91px #22232b;color:#22232b;letter-spacing:3.286px;"><span>Overview</span></div>
<div id="tab1" class="t" style="left:827.00px;top:201.37px;font-size:28.5px;font-weight:400;-webkit-text-stroke:0.91px #9597ab;color:#9597ab;letter-spacing:2.625px;"><span>CI/CD</span></div>
<div id="tab2" class="t" style="left:1039.00px;top:201.37px;font-size:28.5px;font-weight:400;-webkit-text-stroke:0.91px #9597ab;color:#9597ab;letter-spacing:3.625px;"><span>Scorecard</span></div>
<div id="tab3" class="t" style="left:1293.60px;top:201.37px;font-size:28.5px;font-weight:400;-webkit-text-stroke:0.91px #9597ab;color:#9597ab;letter-spacing:3.189px;"><span>Jenkins Test</span></div>
<div id="tab4" class="t" style="left:1630.00px;top:201.37px;font-size:28.5px;font-weight:400;-webkit-text-stroke:0.91px #9597ab;color:#9597ab;letter-spacing:2.500px;"><span>API</span></div>
<div id="tab5" class="t" style="left:1822.00px;top:201.37px;font-size:28.5px;font-weight:400;-webkit-text-stroke:0.91px #9597ab;color:#9597ab;letter-spacing:3.364px;"><span>Dependencies</span></div>
<div id="tab6" class="t" style="left:2169.60px;top:201.37px;font-size:28.5px;font-weight:400;-webkit-text-stroke:0.91px #9597ab;color:#9597ab;letter-spacing:4.034px;"><span>Docs</span></div>
<div id="tab7" class="t" style="left:2376.00px;top:201.37px;font-size:28.5px;font-weight:400;-webkit-text-stroke:0.91px #9597ab;color:#9597ab;letter-spacing:3.444px;"><span>Kubernetes</span></div>
<div id="tab8" class="t" style="left:2646.80px;top:201.37px;font-size:28.5px;font-weight:400;-webkit-text-stroke:0.91px #9597ab;color:#9597ab;letter-spacing:2.859px;"><span>Pull Requests</span></div>
<div id="ab_title" class="t" style="left:545.00px;top:372.22px;font-size:36px;font-weight:400;-webkit-text-stroke:1.15px #22232b;color:#22232b;letter-spacing:2.400px;"><span>About</span></div>
<div id="ab_v1" class="t" style="left:-398.50px;width:2000px;text-align:center;top:509.68px;font-size:24px;font-weight:700;color:#1f4fc6;letter-spacing:2.800px;"><span>VIEW</span></div>
<div id="ab_s1" class="t" style="left:-398.50px;width:2000px;text-align:center;top:549.68px;font-size:24px;font-weight:700;color:#1f4fc6;letter-spacing:1.760px;"><span>SOURCE</span></div>
<div id="ab_v2" class="t" style="left:-215.75px;width:2000px;text-align:center;top:509.68px;font-size:24px;font-weight:700;color:#1f4fc6;letter-spacing:2.733px;"><span>VIEW</span></div>
<div id="ab_s2" class="t" style="left:-215.50px;width:2000px;text-align:center;top:549.68px;font-size:24px;font-weight:700;color:#1f4fc6;letter-spacing:2.714px;"><span>TECHDOCS</span></div>
<div id="ab_desc_l" class="t" style="left:543.00px;top:690.14px;font-size:20.5px;font-weight:400;-webkit-text-stroke:0.66px #6b6d85;color:#6b6d85;letter-spacing:0.720px;"><span>DESCRIPTION</span></div>
<div id="ab_desc" class="t" style="left:545.00px;top:733.89px;font-size:28px;font-weight:400;color:#22232b;letter-spacing:0.952px;"><span>Access control backend service</span></div>
<div id="ab_owner_l" class="t" style="left:544.20px;top:821.94px;font-size:20.5px;font-weight:400;-webkit-text-stroke:0.66px #6b6d85;color:#6b6d85;letter-spacing:0.250px;"><span>OWNER</span></div>
<div id="ab_sys_l" class="t" style="left:994.80px;top:821.94px;font-size:20.5px;font-weight:400;-webkit-text-stroke:0.66px #6b6d85;color:#6b6d85;letter-spacing:0.940px;"><span>SYSTEM</span></div>
<div id="ab_type_l" class="t" style="left:1446.00px;top:821.94px;font-size:20.5px;font-weight:400;-webkit-text-stroke:0.66px #6b6d85;color:#6b6d85;letter-spacing:0.397px;"><span>TYPE</span></div>
<div id="ab_owner" class="t" style="left:580.00px;top:866.19px;font-size:28px;font-weight:400;color:#1f4fc6;letter-spacing:1.500px;"><span>pl-play-acc</span></div>
<div id="ab_sys" class="t" style="left:1031.00px;top:866.59px;font-size:28px;font-weight:400;color:#1f4fc6;letter-spacing:1.286px;"><span>platform</span></div>
<div id="ab_type" class="t" style="left:1445.00px;top:870.29px;font-size:28px;font-weight:700;color:#22232b;letter-spacing:0.467px;"><span>Service</span></div>
<div id="ab_life_l" class="t" style="left:543.20px;top:942.44px;font-size:20.5px;font-weight:400;-webkit-text-stroke:0.66px #6b6d85;color:#6b6d85;letter-spacing:0.575px;"><span>LIFECYCLE</span></div>
<div id="ab_tags_l" class="t" style="left:995.80px;top:942.44px;font-size:20.5px;font-weight:400;-webkit-text-stroke:0.66px #6b6d85;color:#6b6d85;letter-spacing:0.467px;"><span>TAGS</span></div>
<div id="ab_life" class="t" style="left:543.00px;top:990.99px;font-size:28px;font-weight:700;color:#22232b;letter-spacing:0.311px;"><span>production</span></div>
<div id="ab_java" class="t" style="left:1019.50px;top:998.59px;font-size:28px;font-weight:400;color:#1b2640;letter-spacing:-1.267px;"><span>java</span></div>
<div id="sc_title" class="t" style="left:1975.00px;top:372.22px;font-size:36px;font-weight:400;-webkit-text-stroke:1.15px #22232b;color:#22232b;letter-spacing:2.041px;"><span>Scorecard</span></div>
<div id="sc_overall" class="t" style="left:2120.60px;top:503.04px;font-size:42px;font-weight:400;-webkit-text-stroke:1.34px #5d6079;color:#5d6079;letter-spacing:0.417px;"><span>Overall Score</span></div>
<div id="sc_88" class="t" style="left:2146.60px;top:756.25px;font-size:168px;font-weight:400;-webkit-text-stroke:5.38px #7eb15d;color:#7eb15d;letter-spacing:0.000px;transform:scaleX(1.1111);transform-origin:0 0;"><span>88</span></div>
<div id="sc_c1" class="t" style="left:2633.90px;top:592.09px;font-size:43px;font-weight:400;-webkit-text-stroke:1.38px #79ae58;color:#79ae58;letter-spacing:0.000px;transform:scaleX(1.0483);transform-origin:0 0;"><span>100</span></div>
<div id="sc_c2" class="t" style="left:2634.00px;top:819.79px;font-size:43px;font-weight:400;-webkit-text-stroke:1.38px #79ae58;color:#79ae58;letter-spacing:0.000px;transform:scaleX(1.0334);transform-origin:0 0;"><span>100</span></div>
<div id="sc_c3" class="t" style="left:2634.00px;top:1047.59px;font-size:43px;font-weight:400;-webkit-text-stroke:1.38px #79ae58;color:#79ae58;letter-spacing:0.000px;transform:scaleX(1.0334);transform-origin:0 0;"><span>100</span></div>
<div id="sc_t1" class="t" style="left:2768.00px;top:559.06px;font-size:33px;font-weight:400;color:#636882;letter-spacing:0.350px;"><span>Operational readiness</span></div>
<div id="sc_t2" class="t" style="left:2766.50px;top:787.06px;font-size:33px;font-weight:400;color:#636882;letter-spacing:0.461px;"><span>ProdSec Health</span></div>
<div id="sc_d2a" class="t" style="left:2768.50px;top:839.71px;font-size:25.5px;font-weight:400;color:#636882;letter-spacing:-0.159px;"><span>Q4 Goal, mission impossible. Owner:</span></div>
<div id="sc_d2b" class="t" style="left:2767.50px;top:874.71px;font-size:25.5px;font-weight:400;color:#636882;letter-spacing:0.000px;"><span>ProdSec. Slack: #prod-sec</span></div>
<div id="sc_t3a" class="t" style="left:2766.50px;top:1015.06px;font-size:33px;font-weight:400;color:#636882;letter-spacing:0.615px;"><span>ProdSec-Vulnerability Manag</span></div>
<div id="sc_t3b" class="t" style="left:2768.50px;top:1063.06px;font-size:33px;font-weight:400;color:#636882;letter-spacing:0.500px;"><span>ement</span></div>
<div id="m_unreg" class="t" style="left:3073.50px;top:162.71px;font-size:32px;font-weight:400;color:#1f1f1f;letter-spacing:1.250px;z-index:30;"><span>Unregister entity</span></div>
<div id="m_insp" class="t" style="left:3072.50px;top:250.31px;font-size:32px;font-weight:400;color:#1f1f1f;letter-spacing:1.353px;z-index:30;"><span>Inspect entity</span></div>
<div id="m_copy" class="t" style="left:3074.50px;top:337.71px;font-size:32px;font-weight:400;color:#1f1f1f;letter-spacing:0.842px;z-index:30;"><span>Copy entity URL</span></div>
<div id="rel_title" class="t" style="left:551.00px;top:1280.32px;font-size:36px;font-weight:400;-webkit-text-stroke:1.15px #22232b;color:#22232b;letter-spacing:1.491px;"><span>Relations</span></div>
<div id="n1" class="t" style="left:622.00px;top:1697.33px;font-size:16.5px;font-weight:400;color:#fff;letter-spacing:0.029px;"><span>system:platform</span></div>
<div id="n2" class="t" style="left:638.00px;top:1791.93px;font-size:16.5px;font-weight:400;color:#fff;letter-spacing:0.340px;"><span>pl-play-acc</span></div>
<div id="n3" class="t" style="left:587.00px;top:1886.03px;font-size:16.5px;font-weight:400;color:#fff;letter-spacing:0.017px;"><span>api:accesscontrol-service</span></div>
<div id="n4" class="t" style="left:1080.60px;top:1792.63px;font-size:16.5px;font-weight:400;-webkit-text-stroke:0.53px #fff;color:#fff;letter-spacing:0.347px;"><span>component:accesscontrol-service</span></div>
<div id="n5" class="t" style="left:1673.50px;top:1697.43px;font-size:16.5px;font-weight:400;color:#fff;letter-spacing:-0.200px;"><span>component:manager</span></div>
<div id="n6" class="t" style="left:1660.00px;top:1792.33px;font-size:16.5px;font-weight:400;color:#fff;letter-spacing:-0.062px;"><span>component:ng-manager</span></div>
<div id="n7" class="t" style="left:1645.00px;top:1886.13px;font-size:16.5px;font-weight:400;color:#fff;letter-spacing:0.072px;"><span>component:platform-service</span></div>
<div id="e1a" class="t" style="left:853.50px;top:1712.18px;font-size:15.5px;font-weight:400;color:#1a1a1a;letter-spacing:0.334px;"><span>hasPart</span></div>
<div id="e1b" class="t" style="left:914.50px;top:1712.18px;font-size:15.5px;font-weight:400;color:#7a7a7a;letter-spacing:0.457px;"><span>/ partOf</span></div>
<div id="e2a" class="t" style="left:840.50px;top:1805.38px;font-size:15.5px;font-weight:400;color:#1a1a1a;letter-spacing:0.399px;"><span>ownerOf</span></div>
<div id="e2b" class="t" style="left:907.50px;top:1805.38px;font-size:15.5px;font-weight:400;color:#7a7a7a;letter-spacing:0.398px;"><span>/ ownedBy</span></div>
<div id="e3a" class="t" style="left:811.00px;top:1900.48px;font-size:15.5px;font-weight:400;color:#1a1a1a;letter-spacing:0.217px;"><span>apiProvidedBy</span></div>
<div id="e3b" class="t" style="left:919.00px;top:1900.48px;font-size:15.5px;font-weight:400;color:#7a7a7a;letter-spacing:0.500px;"><span>/ providesApi</span></div>
<div id="e4a" class="t" style="left:1373.50px;top:1711.38px;font-size:15.5px;font-weight:400;color:#1a1a1a;letter-spacing:0.400px;"><span>dependsOn</span></div>
<div id="e4b" class="t" style="left:1462.00px;top:1711.38px;font-size:15.5px;font-weight:400;color:#7a7a7a;letter-spacing:0.385px;"><span>/ dependencyOf</span></div>
<div id="e5a" class="t" style="left:1373.50px;top:1805.88px;font-size:15.5px;font-weight:400;color:#1a1a1a;letter-spacing:0.400px;"><span>dependsOn</span></div>
<div id="e5b" class="t" style="left:1462.00px;top:1805.88px;font-size:15.5px;font-weight:400;color:#7a7a7a;letter-spacing:0.385px;"><span>/ dependencyOf</span></div>
<div id="e6a" class="t" style="left:1373.50px;top:1900.08px;font-size:15.5px;font-weight:400;color:#1a1a1a;letter-spacing:0.400px;"><span>dependsOn</span></div>
<div id="e6b" class="t" style="left:1462.00px;top:1900.08px;font-size:15.5px;font-weight:400;color:#7a7a7a;letter-spacing:0.385px;"><span>/ dependencyOf</span></div>
<div id="lk_title" class="t" style="left:1981.20px;top:1280.32px;font-size:36px;font-weight:400;-webkit-text-stroke:1.15px #22232b;color:#22232b;letter-spacing:2.800px;"><span>Links</span></div>
<div id="lk00" class="t" style="left:2023.20px;top:1442.65px;font-size:29px;font-weight:400;color:#2352c7;letter-spacing:0.768px;"><span>repo</span></div>
<div id="lk01" class="t" style="left:2024.20px;top:1498.55px;font-size:29px;font-weight:400;color:#2352c7;letter-spacing:0.052px;"><span>QA kubernetes GCP Reference</span></div>
<div id="lk02" class="t" style="left:2023.20px;top:1554.75px;font-size:29px;font-weight:400;color:#2352c7;letter-spacing:-0.083px;"><span>PROD2 kubernetes GCP Reference</span></div>
<div id="lk03" class="t" style="left:2023.20px;top:1610.75px;font-size:29px;font-weight:400;color:#2352c7;letter-spacing:-0.077px;"><span>PROD3 kubernetes GCP Reference</span></div>
<div id="lk10" class="t" style="left:2688.20px;top:1442.65px;font-size:29px;font-weight:400;color:#2352c7;letter-spacing:0.636px;"><span>Document reference for Access-control</span></div>
<div id="lk11" class="t" style="left:2688.20px;top:1498.55px;font-size:29px;font-weight:400;color:#2352c7;letter-spacing:-0.262px;"><span>PROD1 kubernetes GCP Reference</span></div>
<div id="lk12" class="t" style="left:2688.20px;top:1554.75px;font-size:29px;font-weight:400;color:#2352c7;letter-spacing:0.069px;"><span>UAT kubernetes GCP Reference</span></div>
<div id="lk13" class="t" style="left:2688.20px;top:1610.75px;font-size:29px;font-weight:400;color:#2352c7;letter-spacing:0.152px;"><span>Platform Owned Service Release Calendar</span></div>
</body></html>
